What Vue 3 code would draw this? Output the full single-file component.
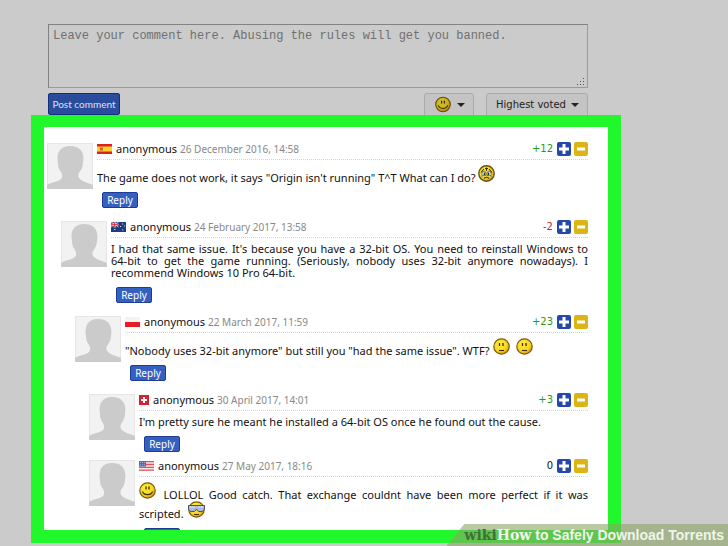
<script setup>
import { ref } from 'vue'

const comment = ref('')
const sort = ref('voted')

// body: plain strings are text, { face } is a smiley
const comments = ref([
  {
    id: 1, level: 0, flag: 'es', date: '26 December 2016, 14:58', votes: 12,
    body: ['The game does not work, it says "Origin isn\'t running" T^T What can I do? ', { face: 'cry' }],
  },
  {
    id: 2, level: 1, flag: 'au', date: '24 February 2017, 13:58', votes: -2,
    body: ["I had that same issue. It's because you have a 32-bit OS. You need to reinstall Windows to 64-bit to get the game running. (Seriously, nobody uses 32-bit anymore nowadays). I recommend Windows 10 Pro 64-bit."],
  },
  {
    id: 3, level: 2, flag: 'pl', date: '22 March 2017, 11:59', votes: 23,
    body: ['"Nobody uses 32-bit anymore" but still you "had the same issue". WTF? ', { face: 'flat' }, ' ', { face: 'flat' }],
  },
  {
    id: 4, level: 3, flag: 'ch', date: '30 April 2017, 14:01', votes: 3,
    body: ["I'm pretty sure he meant he installed a 64-bit OS once he found out the cause."],
  },
  {
    id: 5, level: 3, flag: 'us', date: '27 May 2017, 18:16', votes: 0,
    body: [{ face: 'smile' }, ' LOLLOL Good catch. That exchange couldnt have been more perfect if it was scripted. ', { face: 'cool' }],
  },
])

function isNested(i) {
  return i > 0 && comments.value[i].level > comments.value[i - 1].level
}

function voteText(n) {
  return n > 0 ? '+' + n : String(n)
}
</script>

<template>
  <svg class="sprite" aria-hidden="true">
    <defs>
      <radialGradient id="skin" cx="40%" cy="35%" r="65%">
        <stop offset="0" stop-color="#fff03c" />
        <stop offset="0.7" stop-color="#f8d41c" />
        <stop offset="1" stop-color="#d89a10" />
      </radialGradient>
    </defs>
    <symbol id="face-smile" viewBox="0 0 17 17">
      <circle cx="8.5" cy="8.5" r="7.7" fill="url(#skin)" stroke="#7a5a10" stroke-width="1.2" />
      <path d="M7 4.5v3M10 4.5v3" stroke="#3a2a00" stroke-width="1.3" />
      <path d="M3.5 9.5c1.5 4.2 8.5 4.2 10 0" fill="none" stroke="#3a2a00" stroke-width="1.1" />
    </symbol>
    <symbol id="face-flat" viewBox="0 0 17 17">
      <circle cx="8.5" cy="8.5" r="7.7" fill="url(#skin)" stroke="#7a5a10" stroke-width="1.2" />
      <path d="M6.5 5v3M10 5v3" stroke="#3a2a00" stroke-width="1.3" />
      <path d="M6 12.5h5" stroke="#3a2a00" stroke-width="1.1" />
    </symbol>
    <symbol id="face-cry" viewBox="0 0 17 17">
      <circle cx="8.5" cy="8.5" r="7.7" fill="url(#skin)" stroke="#6a4e10" stroke-width="1.4" />
      <path d="M3 7.5 6 4M14 7.5 11 4M8.5 2.5v3.5M7 3.5h3" stroke="#3a2a00" stroke-width="1.1" />
      <path d="M4 8.5a2 2.3 0 0 1 4 0v2h-4zM9 8.5a2 2.3 0 0 1 4 0v2h-4z" fill="#e4f2f6" stroke="#4a3a10" stroke-width="0.6" />
      <path d="M6.5 7.5v2.5M10.5 7.5v2.5" stroke="#1c3040" stroke-width="1.5" />
      <path d="M4 10.5v2M13 10.5v2" stroke="#62b4c8" stroke-width="1.4" />
      <path d="M6 13.5q2.5-2.5 5 0" fill="none" stroke="#4a3000" stroke-width="1.1" />
    </symbol>
    <symbol id="face-cool" viewBox="0 0 17 17">
      <circle cx="8.5" cy="8.5" r="7.7" fill="url(#skin)" stroke="#7a5a10" stroke-width="1.2" />
      <path d="M0.5 4.5h16v3.5l-2 2.5H10.5L8.5 8 6.5 10.5H2.5L0.5 8z" fill="#a9bbe0" stroke="#4a506c" stroke-width="1" />
      <path d="M2 6h5M10 6h5" stroke="#dce6f8" stroke-width="1.2" />
      <path d="M6 13.5h5" stroke="#4a3000" stroke-width="1.1" />
    </symbol>
  </svg>

  <div class="page">
    <form class="editor" @submit.prevent>
      <div class="field">
        <textarea v-model="comment" aria-label="Comment"
          placeholder="Leave your comment here. Abusing the rules will get you banned."></textarea>
        <svg class="grip" viewBox="0 0 8 8" aria-hidden="true">
          <path d="M6 0h1v1h-1zM3 3h1v1h-1zM6 3h1v1h-1zM0 6h1v1h-1zM3 6h1v1h-1zM6 6h1v1h-1z" fill="#555" />
        </svg>
      </div>
      <div class="toolbar">
        <button type="submit" class="post">Post comment</button>
        <button type="button" class="drop smileys" aria-label="Insert smiley">
          <svg class="face"><use href="#face-smile" /></svg>
          <span class="caret"></span>
        </button>
        <div class="sort">
          <select v-model="sort" class="drop" aria-label="Sort comments">
            <option value="voted">Highest voted</option>
          </select>
          <span class="caret"></span>
        </div>
      </div>
    </form>

    <section class="thread">
      <article v-for="(c, i) in comments" :key="c.id" class="comment" :class="{ nested: isNested(i) }"
        :style="{ paddingLeft: c.level * 14 + 'px' }">
        <svg class="avatar" viewBox="0 0 46 46" aria-hidden="true">
          <rect width="46" height="46" fill="#f2f2f2" />
          <rect x="0.5" y="0.5" width="45" height="45" fill="none" stroke="#e6e6e6" />
          <path d="M0 46v-4c4-3 11-3 14-6 2-2 1-5 0-7-2-3-3-5-3-9-2-10 2-17 12-17s15 6 13 17c0 4-2 7-4 10-1 2-1 4 1 6 3 3 9 4 13 6v4z" fill="#cbcbcb" />
        </svg>
        <div class="main">
          <header class="head">
            <svg v-if="c.flag === 'es'" class="flag" viewBox="0 0 15 10">
              <rect width="15" height="10" fill="#e02020" />
              <rect y="2.5" width="15" height="5" fill="#ffd428" />
              <rect x="3" y="3.5" width="3" height="3" fill="#c8682c" />
            </svg>
            <svg v-else-if="c.flag === 'au'" class="flag" viewBox="0 0 15 10">
              <rect width="15" height="10" fill="#1c3c80" />
              <path d="M0 0l7.5 5M7.5 0L0 5" stroke="#b8c4e0" stroke-width="1" />
              <path d="M3.7 0v5.5M0 2.7h7.5" stroke="#fff" stroke-width="1.8" />
              <path d="M3.7 0v5.5M0 2.7h7.5" stroke="#dd2233" stroke-width="1" />
              <path d="M3 7.5h1.5M11 2h1.2M9 4.5h1.2M13 4h1.2M11 8h1.2" stroke="#c8d0e8" stroke-width="1.2" />
            </svg>
            <svg v-else-if="c.flag === 'pl'" class="flag" viewBox="0 0 15 10">
              <rect width="15" height="5" fill="#f6f2f2" />
              <rect y="5" width="15" height="5" fill="#e81c24" />
            </svg>
            <svg v-else-if="c.flag === 'ch'" class="flag square" viewBox="0 0 10 10">
              <rect width="10" height="10" fill="#dc2030" />
              <path d="M5 2v6M2 5h6" stroke="#fff" stroke-width="2" />
            </svg>
            <svg v-else class="flag" viewBox="0 0 15 10">
              <rect width="15" height="10" fill="#f8e8e8" />
              <path d="M0 0.7h15M0 3.5h15M0 6.3h15M0 9.2h15" stroke="#e05058" stroke-width="1.3" />
              <rect width="7" height="5.5" fill="#4a6cb8" />
              <path d="M1 1.5h5M1 3.8h5" stroke="#b8c8e8" stroke-width="0.8" stroke-dasharray="1 1" />
            </svg>
            <span class="name">anonymous</span>
            <time class="date">{{ c.date }}</time>
            <span class="votes" :class="{ up: c.votes > 0, down: c.votes < 0 }">{{ voteText(c.votes) }}</span>
            <button type="button" class="vote plus" aria-label="Vote up" @click="c.votes++">
              <svg viewBox="0 0 14 14"><path d="M7 2v10M2 7h10" stroke="#fff" stroke-width="3" /></svg>
            </button>
            <button type="button" class="vote minus" aria-label="Vote down" @click="c.votes--">
              <svg viewBox="0 0 14 14"><path d="M3 7h8" stroke="#fff" stroke-width="3" /></svg>
            </button>
          </header>
          <p class="text"><template v-for="(part, n) in c.body" :key="n"><svg v-if="part.face" class="face"><use :href="'#face-' + part.face" /></svg><template v-else>{{ part }}</template></template></p>
          <button type="button" class="reply">Reply</button>
        </div>
      </article>
    </section>

    <div class="caption">
      <span class="wiki">wiki</span><span class="how">How</span> to Safely Download Torrents
    </div>
  </div>
</template>

<style>
body {
  margin: 0;
  background: #cbcbcb;
}
</style>

<style scoped>
.sprite {
  position: absolute;
  width: 0;
  height: 0;
}

.page {
  position: relative;
  box-sizing: border-box;
  height: 100vh;
  display: flex;
  flex-direction: column;
  padding: 24px 107px 3px 31px;
  overflow: hidden;
  color: #111;
  font-family: "Noto Sans", "DejaVu Sans", sans-serif;
  font-size: 11px;
  line-height: 12px;
}

button,
select,
textarea {
  margin: 0;
  font: inherit;
}

.editor {
  padding: 0 33px 0 17px;
}

.field {
  position: relative;
}

textarea {
  display: block;
  box-sizing: border-box;
  width: 100%;
  height: 64px;
  padding: 5px 4px;
  border: 1px solid #9a9a9a;
  border-top-color: #828282;
  border-left-color: #828282;
  border-radius: 0;
  background: transparent;
  font-family: "Liberation Mono", monospace;
  font-size: 12px;
  resize: none;
  outline: none;
}

textarea::placeholder {
  color: #707070;
  opacity: 1;
}

.grip {
  position: absolute;
  right: 3px;
  bottom: 2px;
  width: 8px;
  height: 8px;
}

.toolbar {
  display: flex;
  margin-top: 5px;
  height: 22px;
}

.post,
.reply {
  border: 1px solid #1c3c98;
  border-radius: 2px;
  background: #3560c0;
  color: #fff;
  font-size: 10px;
  cursor: pointer;
}

.post {
  width: 72px;
  margin-right: auto;
  padding: 0;
  border-color: #14307c;
  background: #2a4c9c;
  color: #dde2ee;
  font-family: Lato, sans-serif;
  white-space: nowrap;
}

.drop {
  height: 26px;
  box-sizing: border-box;
  border: 1px solid #aaa;
  border-radius: 3px;
  background: #c4c4c4;
  color: #222;
  cursor: pointer;
}

.smileys {
  display: flex;
  align-items: center;
  gap: 4px;
  width: 50px;
  padding: 0 8px 3px;
  margin-right: 12px;
}

.smileys .face {
  filter: brightness(0.82);
}

.sort {
  position: relative;
}

.sort .drop {
  width: 102px;
  padding: 0 16px 3px 9px;
  font-family: "DejaVu Sans", sans-serif;
  font-size: 10px;
  appearance: none;
}

.sort .caret {
  position: absolute;
  top: 10px;
  right: 9px;
  pointer-events: none;
}

.caret {
  flex: none;
  border: 4px solid transparent;
  border-top-color: #222;
  border-bottom: 0;
}

.thread {
  position: relative;
  flex: 1;
  min-height: 0;
  padding: 16px 20px 0 3px;
  border: 13px solid #20f82c;
  border-top-width: 12px;
  background: #fff;
  overflow: hidden;
}

.comment {
  display: flex;
  gap: 4px;
}

.comment + .comment {
  margin-top: 8px;
}

.comment + .nested {
  margin-top: 13px;
}

.avatar {
  flex: none;
  width: 46px;
  height: 46px;
}

.main {
  flex: 1;
  min-width: 0;
}

.head {
  display: flex;
  align-items: center;
  height: 12px;
  padding-bottom: 4px;
  border-bottom: 1px dotted #d4d4d4;
}

.flag {
  width: 15px;
  height: 10px;
  margin-right: 4px;
}

.flag.square {
  width: 10px;
}

.date {
  margin-left: 3px;
  color: #888;
  font-size: 10px;
}

.votes {
  margin-left: auto;
  margin-right: 4px;
  font-family: "DejaVu Sans", sans-serif;
  font-size: 10px;
}

.up {
  color: #279a18;
}

.down {
  color: #cc1c30;
}

.vote {
  flex: none;
  width: 14px;
  height: 14px;
  padding: 0;
  border: 0;
  border-radius: 2px;
  cursor: pointer;
}

.vote svg {
  display: block;
}

.plus {
  margin-right: 3px;
  background: #2648ac;
}

.minus {
  background: #dcb414;
}

.text {
  margin: 5px 0 8px;
  text-align: justify;
}

.face {
  width: 17px;
  height: 17px;
  margin: 0 2px;
  vertical-align: baseline;
}

.text .face:first-child {
  margin-left: 0;
}

.reply {
  display: block;
  width: 36px;
  height: 16px;
  margin-left: 5px;
  padding: 0;
  line-height: 14px;
}

.caption {
  position: absolute;
  right: 0;
  bottom: 0;
  padding: 0 4px 0 18px;
  background: rgba(140, 163, 101, 0.6);
  clip-path: polygon(18px 0, 100% 0, 100% 100%, 0 100%);
  color: #eef6e8;
  font: bold 14px/22px "Liberation Sans", Arial, sans-serif;
}

.wiki,
.how {
  font-family: "DejaVu Serif", serif;
}

.wiki {
  color: #3f7038;
}
</style>
